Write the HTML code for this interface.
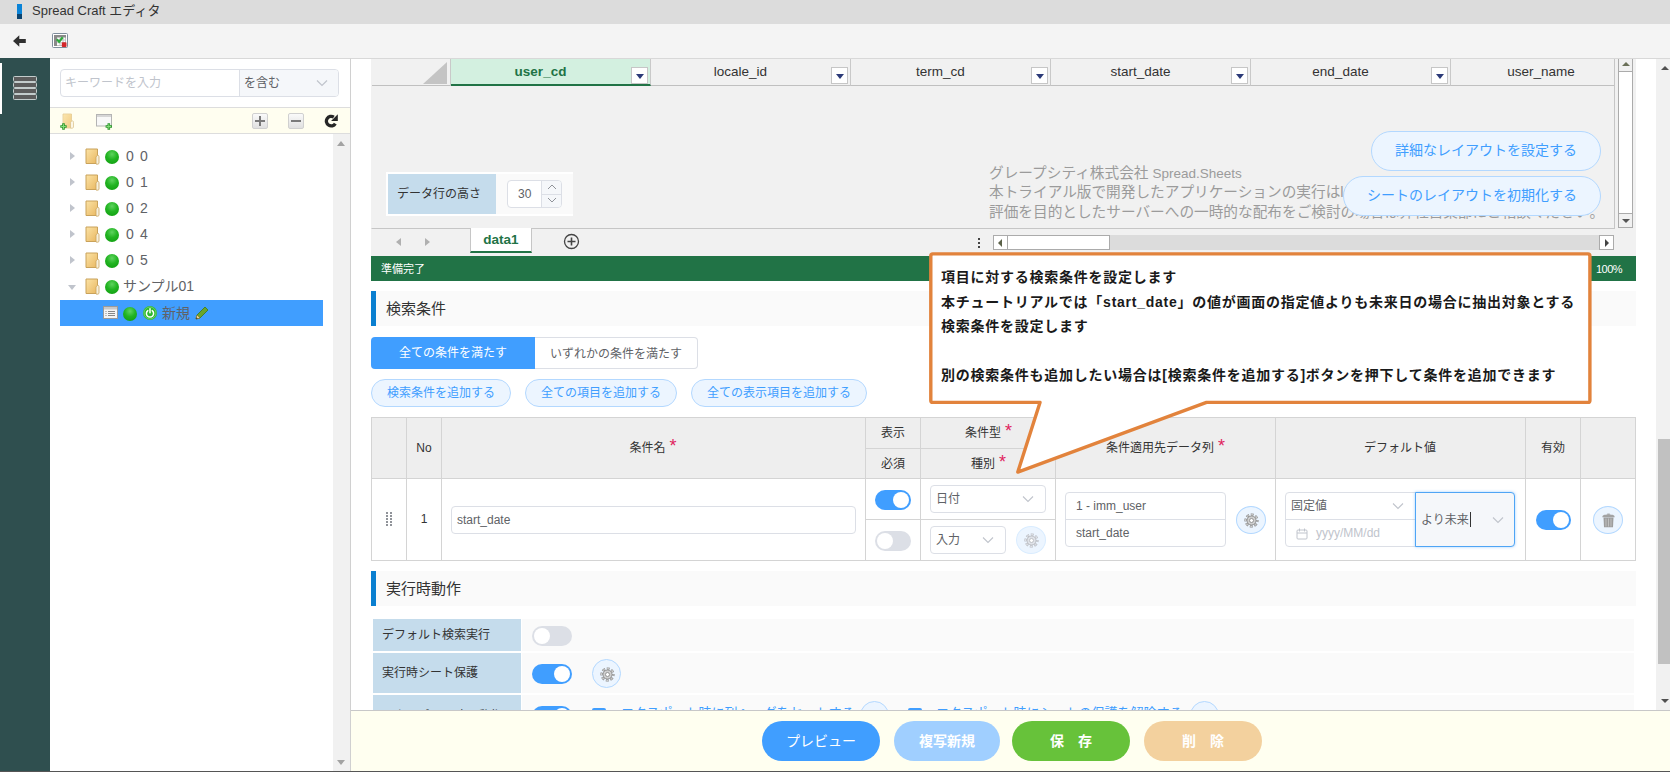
<!DOCTYPE html>
<html lang="ja">
<head>
<meta charset="utf-8">
<title>Spread Craft エディタ</title>
<style>
*{box-sizing:border-box;margin:0;padding:0}
html,body{width:1670px;height:772px;overflow:hidden;background:#fff}
body{font-family:"Liberation Sans","Noto Sans CJK JP",sans-serif;font-size:12px;color:#333;position:relative}
.abs{position:absolute}
#titlebar{left:0;top:0;width:1670px;height:24px;background:#dcdcdc}
#titlebar .mark{left:17px;top:4px;width:5px;height:15px;background:linear-gradient(#0a84d8 0,#0a84d8 66%,#0b4470 66%)}
#titlebar .ttl{left:32px;top:0;line-height:21px;font-size:13px;color:#333;white-space:nowrap}
#toolbar{left:0;top:24px;width:1670px;height:34px;background:#f4f4f4}
#side{left:0;top:58px;width:50px;height:714px;background:#2f4f4f}
#side .sel{left:0;top:5px;width:2px;height:51px;background:#fff}
#treepane{left:50px;top:58px;width:301px;height:714px;background:#fff;border-right:1px solid #d0d0d0;border-top:1px solid #d8d8d8}
#main{left:351px;top:58px;width:1319px;height:714px;background:#fff;overflow:hidden;border-top:1px solid #d8d8d8}

#toolbar .back{left:13px;top:11px}
#toolbar .ic2{left:52px;top:9px}
#side .hb{left:13px;width:24px;height:6px;background:#5c5c5c;border:1px solid #c3cccc;border-radius:1.5px}
#search{left:10px;top:10px;width:279px;height:28px;border:1px solid #dcdfe6;border-radius:4px;background:#fff}
#search .ph{left:4px;top:0;line-height:26px;font-size:12px;color:#c0c4cc;white-space:nowrap}
#search .sel{left:178px;top:0;width:99px;height:26px;background:#f5f7fa;border-left:1px solid #dcdfe6;border-radius:0 3px 3px 0}
#search .sel span{position:absolute;left:4px;top:0;line-height:26px;font-size:12px;color:#606266}
#ttool{left:0;top:48px;width:300px;height:27px;background:#fffef0;border-top:1px solid #ddd;border-bottom:1px solid #ddd}
.sqbtn{width:16px;height:16px;border:1px solid #d0d0d0;border-radius:2px;background:linear-gradient(#fafafa,#e0e0e0)}
.sqbtn i{position:absolute;background:#7a7a7a}
#tree{left:0;top:76px;width:283px;height:637px}
#tscroll{left:283px;top:75px;width:17px;height:637px;background:#f1f1f1}
.trow{left:10px;width:263px;height:26px;white-space:nowrap}
.trow .arr{position:absolute;top:9px;width:0;height:0;border:4px solid transparent}
.trow .arr.r{left:10px;border-left:5px solid #c0c4cc;border-right:0}
.trow .arr.d{left:8px;top:12px;border-top:5px solid #c0c4cc;border-bottom:0}
.trow .fold{position:absolute;left:25px;top:5px}
.trow .ball{position:absolute;left:45px;top:7px;width:14px;height:14px;border-radius:50%;background:radial-gradient(circle at 50% 30%,#5fd35f 0,#22b422 45%,#0c9a0c 100%)}
.trow .lbl{position:absolute;left:66px;top:1px;line-height:25px;font-size:14px;color:#606266;letter-spacing:1.2px}
.trow.sel{background:#409eff}

#mc{left:-351px;top:-59px;width:1670px;height:772px}
#sheet{left:371px;top:58px;width:1244px;height:171px;background:#f1f1f1;border:1px solid #c6c6c6;border-left-color:#f1f1f1;overflow:hidden}
.ch{top:0;height:27px;border-right:1px solid #c9c9c9;border-bottom:1px solid #c0c0c0;font-size:13.5px;line-height:25px;text-align:center;color:#333;font-family:"Liberation Sans",sans-serif}
.ch.on{background:#d3f0e0;color:#217346;font-weight:bold;border-bottom:2px solid #217346}
.fb{position:absolute;right:2px;bottom:1px;width:17px;height:17px;background:#fff;border:1px solid #c6c6c6}
.fb:after{content:"";position:absolute;left:4px;top:6px;border:4px solid transparent;border-top:5px solid #2b3a78;border-bottom:0}
.ch.on .fb{bottom:0}
.wm{left:617px;white-space:nowrap;font-size:14.67px;color:#9b9b9b;line-height:20px}
.pill{border:1px solid #b3d8ff;background:#ecf5ff;color:#409eff;border-radius:20px;text-align:center;white-space:nowrap}

.sech{left:371px;width:1265px;height:35px;background:#fafafa;border-left:5px solid #0a7fd0;font-size:15px;line-height:35px;padding-left:10px;color:#333}
.rb{top:337px;height:32px;font-size:12px;line-height:32px;text-align:center;white-space:nowrap}
.p28{top:379px;height:28px;line-height:26px;font-size:12px;border-radius:14px}
.hl{background:#d4d4d4}
.th{font-size:12px;color:#333;text-align:center;white-space:nowrap;line-height:16px}
.th b{font-weight:normal;color:#e0245e;position:relative;top:-.5px;margin-left:4px;font-size:18px;line-height:0}
.sw{width:36px;height:20px;border-radius:10px;background:#409eff}
.sw:after{content:"";position:absolute;top:2px;right:2px;width:16px;height:16px;border-radius:50%;background:#fff}
.sw.off{background:#dcdfe6}
.sw.off:after{right:auto;left:2px}
.inp{border:1px solid #dcdfe6;border-radius:4px;background:#fff;font-size:12px;color:#606266;white-space:nowrap}
.inp span{position:absolute;top:0}
.gear{border-radius:50%;background:#ecf5ff;border:1px solid #b3d8ff}
.lab{left:373px;width:148px;background:#c5dcec;font-size:12px;color:#333;padding-left:9px;white-space:nowrap}
.rowbg{left:522px;width:1112px;background:#fafafa}
.bb{top:721px;height:40px;border-radius:20px;color:#fff;text-align:center;font-size:14px;line-height:40px;white-space:nowrap}
</style>
</head>
<body>
<div id="titlebar" class="abs"><div class="abs mark"></div><div class="abs ttl">Spread Craft エディタ</div></div>
<div id="toolbar" class="abs"><svg class="abs back" width="14" height="12" viewBox="0 0 14 12"><path d="M0 6l6.300-5.800v3.700H12.800v4.200H6.300V11.800z" fill="#303030"/></svg>
<svg class="abs ic2" width="16" height="15" viewBox="0 0 16 15"><rect x=".5" y=".5" width="15" height="14" rx="1" fill="#fff" stroke="#7f8d9b"/><rect x="2" y="2" width="12" height="11" fill="#8a8a8a"/><path d="M5 4.500h8.500v8H5z" fill="#fff"/><path d="M5 7h8.500M5 9.700h8.500M8 4.500v8M11 4.500v8" stroke="#b5b5b5" stroke-width=".8"/><path d="M4.800 6.300l2.300 2.600 3.600-4.600" fill="none" stroke="#2eaa3c" stroke-width="2.200"/><rect x="9.800" y="9.300" width="4.700" height="4.700" rx=".8" fill="#d3262b"/></svg></div>
<div id="side" class="abs"><div class="abs sel"></div><div class="abs hb" style="top:18px"></div><div class="abs hb" style="top:24px"></div><div class="abs hb" style="top:30px"></div><div class="abs hb" style="top:36px"></div></div>
<div id="treepane" class="abs">
<div id="search" class="abs"><span class="abs ph">キーワードを入力</span><div class="abs sel"><span>を含む</span><svg class="abs" style="left:76px;top:9px" width="12" height="8" viewBox="0 0 12 8"><path d="M1 1.5l5 5 5-5" fill="none" stroke="#c0c4cc" stroke-width="1.2"/></svg></div></div>
<div id="ttool" class="abs">
<svg class="abs" style="left:10px;top:5px" width="16" height="18" viewBox="0 0 16 18"><path d="M3 1h8.500v14H3z" fill="#fbe7b4" stroke="#e3c98f" stroke-width=".8"/><path d="M3.400 1.400h7.700v13.200H3.400z" fill="url(#fg)" opacity=".55"/><path d="M10.500 9.500c1.300-2.500 3-2 3 0v4.500c0 1-1.200 1.500-3 1z" fill="#fbf6e6" stroke="#d8bd84" stroke-width=".7"/><path d="M3.500 10.300v6.400M.3 13.500h6.400" stroke="#2d962d" stroke-width="2.600"/><path d="M3.500 11.200v4.600M1.200 13.500h4.600" stroke="#86e07a" stroke-width="1"/></svg>
<svg class="abs" style="left:46px;top:6px" width="18" height="18" viewBox="0 0 18 18"><rect x=".5" y=".5" width="15" height="11.500" fill="#f8f8f8" stroke="#b4b4b4"/><rect x="1" y="1" width="14" height="2" fill="#d6d6d6"/><path d="M12.800 9.300v6.400M9.600 12.500h6.400" stroke="#2d962d" stroke-width="2.600"/><path d="M12.800 10.200v4.600M10.500 12.500h4.600" stroke="#86e07a" stroke-width="1"/></svg>
<div class="abs sqbtn" style="left:202px;top:5px"><i style="left:2px;top:6px;width:10px;height:2px"></i><i style="left:6px;top:2px;width:2px;height:10px"></i></div>
<div class="abs sqbtn" style="left:238px;top:5px"><i style="left:2px;top:6px;width:10px;height:2px"></i></div>
<svg class="abs" style="left:274px;top:6px" width="14" height="14" viewBox="0 0 14 14"><path d="M11.300 9.600A4.800 4.800 0 1 1 9.800 3.100" fill="none" stroke="#262626" stroke-width="3.300"/><path d="M13.800 .3v6.700H7.100z" fill="#262626"/></svg>
</div>
<div id="tree" class="abs"><div class="abs trow" style="top:8px"><span class="arr r"></span><svg class="fold" width="15" height="17" viewBox="0 0 15 17"><defs><linearGradient id="fg" x1="0" y1="0" x2="1" y2="1"><stop offset="0" stop-color="#fbe3a6"/><stop offset="1" stop-color="#e9b760"/></linearGradient></defs><path d="M1 1h11.5v14.5H1z" fill="url(#fg)" stroke="#c9a25a" stroke-width="1"/><path d="M11 9c1.5-2.5 3-2 3 0v6c0 1-1.2 1.5-3 1z" fill="#f7f0dc" stroke="#c9a25a" stroke-width=".8"/></svg><span class="ball"></span><span class="lbl">0 0</span></div><div class="abs trow" style="top:34px"><span class="arr r"></span><svg class="fold" width="15" height="17" viewBox="0 0 15 17"><defs><linearGradient id="fg" x1="0" y1="0" x2="1" y2="1"><stop offset="0" stop-color="#fbe3a6"/><stop offset="1" stop-color="#e9b760"/></linearGradient></defs><path d="M1 1h11.5v14.5H1z" fill="url(#fg)" stroke="#c9a25a" stroke-width="1"/><path d="M11 9c1.5-2.5 3-2 3 0v6c0 1-1.2 1.5-3 1z" fill="#f7f0dc" stroke="#c9a25a" stroke-width=".8"/></svg><span class="ball"></span><span class="lbl">0 1</span></div><div class="abs trow" style="top:60px"><span class="arr r"></span><svg class="fold" width="15" height="17" viewBox="0 0 15 17"><defs><linearGradient id="fg" x1="0" y1="0" x2="1" y2="1"><stop offset="0" stop-color="#fbe3a6"/><stop offset="1" stop-color="#e9b760"/></linearGradient></defs><path d="M1 1h11.5v14.5H1z" fill="url(#fg)" stroke="#c9a25a" stroke-width="1"/><path d="M11 9c1.5-2.5 3-2 3 0v6c0 1-1.2 1.5-3 1z" fill="#f7f0dc" stroke="#c9a25a" stroke-width=".8"/></svg><span class="ball"></span><span class="lbl">0 2</span></div><div class="abs trow" style="top:86px"><span class="arr r"></span><svg class="fold" width="15" height="17" viewBox="0 0 15 17"><defs><linearGradient id="fg" x1="0" y1="0" x2="1" y2="1"><stop offset="0" stop-color="#fbe3a6"/><stop offset="1" stop-color="#e9b760"/></linearGradient></defs><path d="M1 1h11.5v14.5H1z" fill="url(#fg)" stroke="#c9a25a" stroke-width="1"/><path d="M11 9c1.5-2.5 3-2 3 0v6c0 1-1.2 1.5-3 1z" fill="#f7f0dc" stroke="#c9a25a" stroke-width=".8"/></svg><span class="ball"></span><span class="lbl">0 4</span></div><div class="abs trow" style="top:112px"><span class="arr r"></span><svg class="fold" width="15" height="17" viewBox="0 0 15 17"><defs><linearGradient id="fg" x1="0" y1="0" x2="1" y2="1"><stop offset="0" stop-color="#fbe3a6"/><stop offset="1" stop-color="#e9b760"/></linearGradient></defs><path d="M1 1h11.5v14.5H1z" fill="url(#fg)" stroke="#c9a25a" stroke-width="1"/><path d="M11 9c1.5-2.5 3-2 3 0v6c0 1-1.2 1.5-3 1z" fill="#f7f0dc" stroke="#c9a25a" stroke-width=".8"/></svg><span class="ball"></span><span class="lbl">0 5</span></div><div class="abs trow" style="top:138px"><span class="arr d"></span><svg class="fold" width="15" height="17" viewBox="0 0 15 17"><defs><linearGradient id="fg" x1="0" y1="0" x2="1" y2="1"><stop offset="0" stop-color="#fbe3a6"/><stop offset="1" stop-color="#e9b760"/></linearGradient></defs><path d="M1 1h11.5v14.5H1z" fill="url(#fg)" stroke="#c9a25a" stroke-width="1"/><path d="M11 9c1.5-2.5 3-2 3 0v6c0 1-1.2 1.5-3 1z" fill="#f7f0dc" stroke="#c9a25a" stroke-width=".8"/></svg><span class="ball"></span><span class="lbl" style="left:63px;letter-spacing:0">サンプル01</span></div><div class="abs trow sel" style="top:165px">
<svg class="abs" style="left:43px;top:6px" width="15" height="13" viewBox="0 0 15 13"><rect x=".5" y=".5" width="14" height="12" fill="#f4f4f4" stroke="#9a9a9a"/><rect x="1" y="1" width="13" height="2.5" fill="#c8c8c8"/><path d="M2.5 5.5h1M2.5 7.5h1M2.5 9.5h1M5 5.5h7M5 7.5h7M5 9.5h7" stroke="#888" stroke-width="1"/></svg>
<span class="ball" style="left:63px"></span>
<svg class="abs" style="left:83px;top:6px" width="14" height="14" viewBox="0 0 14 14"><circle cx="7" cy="7" r="7" fill="#2eb82e"/><circle cx="7" cy="7" r="6" fill="none" stroke="#8fe08f" stroke-width=".6"/><path d="M4.8 4.6a3.6 3.6 0 1 0 4.4 0" fill="none" stroke="#fff" stroke-width="1.5" stroke-linecap="round"/><path d="M7 2.8v4" stroke="#fff" stroke-width="1.5" stroke-linecap="round"/></svg>
<span class="lbl" style="left:102px;letter-spacing:0">新規</span>
<svg class="abs" style="left:134px;top:5px" width="16" height="16" viewBox="0 0 16 16"><path d="M2 14l1-4 8-8 3 3-8 8z" fill="#6aa52a" stroke="#3f7a12" stroke-width=".8"/><path d="M2 14l1-4 3 3z" fill="#f1d9a0" stroke="#8a6a2a" stroke-width=".6"/><path d="M2 14l.5-1.8 1.3 1.3z" fill="#333"/></svg>
</div></div>
<div id="tscroll" class="abs">
<div class="abs" style="left:4px;top:7px;width:0;height:0;border:4px solid transparent;border-top:0;border-bottom:5px solid #a3a3a3"></div>
<div class="abs" style="left:4px;top:626px;width:0;height:0;border:4px solid transparent;border-bottom:0;border-top:5px solid #a3a3a3"></div>
</div>
</div>
<div id="main" class="abs"><div id="mc" class="abs"><div id="sheet" class="abs"><div class="abs ch" style="left:0;width:79px"><div class="abs" style="left:51px;top:3px;width:0;height:0;border-left:24px solid transparent;border-bottom:22px solid #c4c4c4"></div></div><div class="abs ch on" style="left:79px;width:200px;padding-right:20px;">user_cd<span class="fb"></span></div><div class="abs ch" style="left:279px;width:200px;padding-right:20px;">locale_id<span class="fb"></span></div><div class="abs ch" style="left:479px;width:200px;padding-right:20px;">term_cd<span class="fb"></span></div><div class="abs ch" style="left:679px;width:200px;padding-right:20px;">start_date<span class="fb"></span></div><div class="abs ch" style="left:879px;width:200px;padding-right:20px;">end_date<span class="fb"></span></div><div class="abs ch" style="left:1079px;width:166px;padding-left:14px;border-right:0;">user_name</div>
<div class="abs wm" style="top:104px">グレープシティ株式会社 <span style="font-size:13.5px">Spread.Sheets</span></div>
<div class="abs wm" style="top:123px">本トライアル版で開発したアプリケーションの実行はlocalhostでのみ可能です。</div>
<div class="abs wm" style="top:143px">評価を目的としたサーバーへの一時的な配布をご検討の場合は弊社営業部にご相談ください。</div>
</div>
<div class="abs" style="left:386px;top:172px;width:187px;height:44px;background:#fff"></div><div class="abs" style="left:496px;top:174px;width:77px;height:40px;background:#fafafa"></div>
<div class="abs" style="left:388px;top:174px;width:108px;height:40px;background:#c5dcec;line-height:40px;padding-left:9px;font-size:12px;color:#333;white-space:nowrap">データ行の高さ</div>
<div class="abs" style="left:507px;top:180px;width:55px;height:28px;border:1px solid #dcdfe6;border-radius:4px;background:#fff;font-size:12px;line-height:26px;color:#606266"><span class="abs" style="left:10px;top:0">30</span>
<div class="abs" style="left:33px;top:0;width:20px;height:26px;border-left:1px solid #dcdfe6;background:#f5f7fa;border-radius:0 3px 3px 0"><div class="abs" style="left:0;top:13px;width:20px;height:1px;background:#dcdfe6"></div>
<svg class="abs" style="left:5px;top:3px" width="10" height="6" viewBox="0 0 10 6"><path d="M1 5l4-4 4 4" fill="none" stroke="#909399" stroke-width="1"/></svg>
<svg class="abs" style="left:5px;top:16px" width="10" height="6" viewBox="0 0 10 6"><path d="M1 1l4 4 4-4" fill="none" stroke="#909399" stroke-width="1"/></svg></div></div>
<div class="abs pill" style="left:1371px;top:131px;width:230px;height:40px;line-height:37px;font-size:14px">詳細なレイアウトを設定する</div>
<div class="abs pill" style="left:1343px;top:176px;width:258px;height:40px;line-height:37px;font-size:14px">シートのレイアウトを初期化する</div>
<div class="abs" style="left:1615px;top:58px;width:21px;height:171px;background:#f1f1f1"></div>
<div class="abs" style="left:1618px;top:58px;width:15px;height:170px;background:#fff;border:1px solid #ababab">
<div class="abs" style="left:0;top:0;width:13px;height:13px;border-bottom:1px solid #ababab;background:#f1f1f1"><i class="abs" style="left:2.5px;top:3px;border:4px solid transparent;border-top:0;border-bottom:4.5px solid #6a7058"></i></div>
<div class="abs" style="left:0;bottom:0;width:13px;height:14px;border-top:1px solid #ababab;background:#f1f1f1"><i class="abs" style="left:2.5px;top:5px;border:4px solid transparent;border-bottom:0;border-top:4.500px solid #555"></i></div>
</div>
<div class="abs" id="tabstrip" style="left:371px;top:229px;width:1265px;height:27px;background:#f1f1f1">
<i class="abs" style="left:25px;top:9px;border:4px solid transparent;border-left:0;border-right:5px solid #b0b0b0"></i>
<i class="abs" style="left:54px;top:9px;border:4px solid transparent;border-right:0;border-left:5px solid #b0b0b0"></i>
<div class="abs" style="left:99px;top:-1px;width:62px;height:25px;background:#fff;border-left:1px solid #c6c6c6;border-right:1px solid #c6c6c6;border-bottom:2px solid #217346;text-align:center;font-weight:bold;color:#217346;font-size:13.5px;line-height:23px">data1</div>
<svg class="abs" style="left:192px;top:4px" width="17" height="17" viewBox="0 0 17 17"><circle cx="8.5" cy="8.5" r="7" fill="none" stroke="#444" stroke-width="1.3"/><path d="M8.5 4.5v8M4.5 8.5h8" stroke="#444" stroke-width="1.6"/></svg>
<div class="abs" style="left:607px;top:8px;width:3px;height:14px;font-size:0"><i class="abs" style="left:0;top:1px;width:2px;height:2px;background:#444"></i><i class="abs" style="left:0;top:5px;width:2px;height:2px;background:#444"></i><i class="abs" style="left:0;top:9px;width:2px;height:2px;background:#444"></i></div>
<div class="abs" style="left:622px;top:6px;width:621px;height:15px;background:#dcdcdc">
<div class="abs" style="left:0;top:0;width:15px;height:15px;background:#fff;border:1px solid #ababab"><i class="abs" style="left:4px;top:2.5px;border:4px solid transparent;border-left:0;border-right:4.5px solid #5b6148"></i></div>
<div class="abs" style="left:14px;top:0;width:103px;height:15px;background:#fff;border:1px solid #ababab"></div>
<div class="abs" style="right:0;top:0;width:15px;height:15px;background:#fff;border:1px solid #ababab"><i class="abs" style="left:5px;top:2.5px;border:4px solid transparent;border-right:0;border-left:4.5px solid #444"></i></div>
</div>
</div>
<div class="abs" style="left:371px;top:256px;width:1265px;height:25px;background:#217346;color:#fff;font-size:11px;line-height:24px"><span class="abs" style="left:10px;top:1px">準備完了</span><span class="abs" style="left:1225px;top:1px;font-size:11px;letter-spacing:-.5px">100%</span></div>

<div class="abs sech" style="top:291px">検索条件</div>
<div class="abs rb" style="left:371px;width:164px;background:#409eff;color:#fff;border-radius:4px 0 0 4px">全ての条件を満たす</div>
<div class="abs rb" style="left:535px;width:163px;background:#fff;color:#606266;border:1px solid #dcdfe6;border-left:0;border-radius:0 4px 4px 0">いずれかの条件を満たす</div>
<div class="abs pill p28" style="left:371px;width:140px">検索条件を追加する</div>
<div class="abs pill p28" style="left:525px;width:152px">全ての項目を追加する</div>
<div class="abs pill p28" style="left:691px;width:176px">全ての表示項目を追加する</div>
<div class="abs" style="left:371px;top:417px;width:1265px;height:62px;background:#eee"></div><i class="abs hl" style="left:371px;top:417px;width:1265px;height:1px"></i><i class="abs hl" style="left:371px;top:478px;width:1265px;height:1px"></i><i class="abs hl" style="left:371px;top:560px;width:1265px;height:1px"></i><i class="abs hl" style="left:371px;top:417px;width:1px;height:144px"></i><i class="abs hl" style="left:406px;top:417px;width:1px;height:144px"></i><i class="abs hl" style="left:441px;top:417px;width:1px;height:144px"></i><i class="abs hl" style="left:865px;top:417px;width:1px;height:144px"></i><i class="abs hl" style="left:920px;top:417px;width:1px;height:144px"></i><i class="abs hl" style="left:1055px;top:417px;width:1px;height:144px"></i><i class="abs hl" style="left:1275px;top:417px;width:1px;height:144px"></i><i class="abs hl" style="left:1525px;top:417px;width:1px;height:144px"></i><i class="abs hl" style="left:1580px;top:417px;width:1px;height:144px"></i><i class="abs hl" style="left:1635px;top:417px;width:1px;height:144px"></i><i class="abs hl" style="left:865px;top:448px;width:190px;height:1px"></i><i class="abs hl" style="left:865px;top:519px;width:190px;height:1px"></i><div class="abs th" style="left:324px;top:440px;width:200px">No</div><div class="abs th" style="left:553px;top:440px;width:200px">条件名<b>*</b></div><div class="abs th" style="left:793px;top:425px;width:200px">表示</div><div class="abs th" style="left:793px;top:456px;width:200px">必須</div><div class="abs th" style="left:888.5px;top:425px;width:200px">条件型<b>*</b></div><div class="abs th" style="left:888.5px;top:456px;width:200px">種別<b>*</b></div><div class="abs th" style="left:1065.5px;top:440px;width:200px">条件適用先データ列<b>*</b></div><div class="abs th" style="left:1300px;top:440px;width:200px">デフォルト値</div><div class="abs th" style="left:1453px;top:440px;width:200px">有効</div><div class="abs th" style="left:324px;top:511px;width:200px">1</div><div class="abs" style="left:386px;top:512px;width:6px;height:14px"><i class="abs" style="left:0px;top:0px;width:2px;height:2px;background:#909399"></i><i class="abs" style="left:0px;top:3px;width:2px;height:2px;background:#909399"></i><i class="abs" style="left:0px;top:6px;width:2px;height:2px;background:#909399"></i><i class="abs" style="left:0px;top:9px;width:2px;height:2px;background:#909399"></i><i class="abs" style="left:0px;top:12px;width:2px;height:2px;background:#909399"></i><i class="abs" style="left:4px;top:0px;width:2px;height:2px;background:#909399"></i><i class="abs" style="left:4px;top:3px;width:2px;height:2px;background:#909399"></i><i class="abs" style="left:4px;top:6px;width:2px;height:2px;background:#909399"></i><i class="abs" style="left:4px;top:9px;width:2px;height:2px;background:#909399"></i><i class="abs" style="left:4px;top:12px;width:2px;height:2px;background:#909399"></i></div><div class="abs inp" style="left:451px;top:506px;width:405px;height:28px;line-height:26px"><span style="left:5px">start_date</span></div><div class="abs sw" style="left:875px;top:490px"></div><div class="abs sw off" style="left:875px;top:531px"></div><div class="abs inp" style="left:930px;top:485px;width:116px;height:28px;line-height:26px"><span style="left:5px">日付</span><svg class="abs" style="left:91px;top:9px" width="12" height="8" viewBox="0 0 12 8"><path d="M1 1.5l5 5 5-5" fill="none" stroke="#c0c4cc" stroke-width="1.1"/></svg></div><div class="abs inp" style="left:930px;top:526px;width:76px;height:28px;line-height:26px"><span style="left:5px">入力</span><svg class="abs" style="left:51px;top:9px" width="12" height="8" viewBox="0 0 12 8"><path d="M1 1.5l5 5 5-5" fill="none" stroke="#c0c4cc" stroke-width="1.1"/></svg></div><div class="abs gear" style="left:1016px;top:526px;width:30px;height:28px;border-color:#d9ecff"><svg class="abs" style="left:6.5px;top:5.5px" width="15" height="15" viewBox="0 0 15 15"><circle cx="7.5" cy="7.5" r="5.900" fill="none" stroke="#b9bcc2" stroke-width="2.400" stroke-dasharray="2.900 1.734" stroke-dashoffset="1.450"/><circle cx="7.5" cy="7.5" r="5.900" fill="none" stroke="#dfe2e8" stroke-width="1.200" stroke-dasharray="1.900 2.734" stroke-dashoffset=".95"/><circle cx="7.5" cy="7.5" r="4.500" fill="#dfe2e8" stroke="#b9bcc2" stroke-width=".9"/><circle cx="7.5" cy="7.5" r="2" fill="#fff" stroke="#b9bcc2" stroke-width=".9"/></svg></div><div class="abs inp" style="left:1065px;top:492px;width:161px;height:55px;line-height:26px"><span style="left:10px;top:0">1 - imm_user</span><span style="left:10px;top:27px">start_date</span><i class="abs hl" style="left:0;top:26px;width:159px;height:1px;background:#dcdfe6"></i></div><div class="abs gear" style="left:1236px;top:506px;width:30px;height:28px"><svg class="abs" style="left:6.5px;top:5.5px" width="15" height="15" viewBox="0 0 15 15"><circle cx="7.5" cy="7.5" r="5.900" fill="none" stroke="#8e8e8e" stroke-width="2.400" stroke-dasharray="2.900 1.734" stroke-dashoffset="1.450"/><circle cx="7.5" cy="7.5" r="5.900" fill="none" stroke="#cfcfcf" stroke-width="1.200" stroke-dasharray="1.900 2.734" stroke-dashoffset=".95"/><circle cx="7.5" cy="7.5" r="4.500" fill="#cfcfcf" stroke="#8e8e8e" stroke-width=".9"/><circle cx="7.5" cy="7.5" r="2" fill="#fff" stroke="#8e8e8e" stroke-width=".9"/></svg></div><div class="abs inp" style="left:1285px;top:492px;width:131px;height:55px;line-height:26px;border-radius:4px 0 0 4px"><span style="left:5px;top:0">固定値</span><svg class="abs" style="left:106px;top:9px" width="12" height="8" viewBox="0 0 12 8"><path d="M1 1.5l5 5 5-5" fill="none" stroke="#c0c4cc" stroke-width="1.1"/></svg><i class="abs hl" style="left:0;top:26px;width:129px;height:1px;background:#dcdfe6"></i><svg class="abs" style="left:10px;top:35px" width="12" height="12" viewBox="0 0 12 12"><rect x="1" y="2" width="10" height="9" rx="1" fill="none" stroke="#c0c4cc"/><path d="M1 5h10M3.5 .5v3M8.500 .5v3" stroke="#c0c4cc"/></svg><span style="left:30px;top:27px;color:#c0c4cc">yyyy/MM/dd</span></div><div class="abs inp" style="left:1415px;top:492px;width:100px;height:55px;line-height:55px;border-color:#4fa5f5;background:#f5f7fa;border-radius:0 4px 4px 0;box-shadow:0 0 3px rgba(64,158,255,.5)"><span style="left:5px">より未来</span><i class="abs" style="left:54px;top:19px;width:1px;height:15px;background:#333"></i><svg class="abs" style="left:76px;top:23px" width="12" height="8" viewBox="0 0 12 8"><path d="M1 1.5l5 5 5-5" fill="none" stroke="#c0c4cc" stroke-width="1.1"/></svg></div><div class="abs sw" style="left:1536px;top:510px;width:35px"></div><div class="abs gear" style="left:1593px;top:506px;width:30px;height:28px"><svg class="abs" style="left:8px;top:6px" width="13" height="15" viewBox="0 0 13 15"><path d="M5.200 .6h2.600v1.200h-2.600z" fill="#a0a0a0"/><path d="M.3 4.200c.3-2 1.500-2.600 6.200-2.600s5.900.6 6.200 2.600z" fill="#a3a3a3"/><path d="M1.500 4.600h10l-.5 9.600h-9z" fill="#9d9d9d"/><path d="M4 5.500v8M6.500 5.500v8M9 5.500v8" stroke="#c4c4c4" stroke-width=".9"/></svg></div>
<div class="abs sech" style="top:571px">実行時動作</div>
<div class="abs lab" style="top:619px;height:32px;line-height:33px">デフォルト検索実行</div><div class="abs rowbg" style="top:619px;height:32px"></div>
<div class="abs sw off" style="left:532px;top:626px;width:40px"></div>
<div class="abs lab" style="top:653px;height:40px;line-height:40px">実行時シート保護</div><div class="abs rowbg" style="top:653px;height:40px"></div>
<div class="abs sw" style="left:532px;top:664px;width:40px"></div>
<div class="abs gear" style="left:592px;top:659px;width:29px;height:29px"><svg class="abs" style="left:6.5px;top:6.5px" width="15" height="15" viewBox="0 0 15 15"><circle cx="7.5" cy="7.5" r="5.900" fill="none" stroke="#8e8e8e" stroke-width="2.400" stroke-dasharray="2.900 1.734" stroke-dashoffset="1.450"/><circle cx="7.5" cy="7.5" r="5.900" fill="none" stroke="#cfcfcf" stroke-width="1.200" stroke-dasharray="1.900 2.734" stroke-dashoffset=".95"/><circle cx="7.5" cy="7.5" r="4.500" fill="#cfcfcf" stroke="#8e8e8e" stroke-width=".9"/><circle cx="7.5" cy="7.5" r="2" fill="#fff" stroke="#8e8e8e" stroke-width=".9"/></svg></div>
<div class="abs lab" style="top:695px;height:39px;line-height:42px">エクスポート時の動作</div><div class="abs rowbg" style="top:695px;height:39px"></div>
<div class="abs sw" style="left:532px;top:706px;width:40px"></div>
<div class="abs" style="left:592px;top:708px;width:14px;height:14px;border-radius:2px;background:#409eff"></div>
<div class="abs" style="left:621px;top:705px;font-size:13px;line-height:16px;color:#409eff;white-space:nowrap">エクスポート時に列ヘッダをセットする</div>
<div class="abs gear" style="left:860px;top:701px;width:29px;height:29px"></div>
<div class="abs" style="left:908px;top:708px;width:14px;height:14px;border-radius:2px;background:#409eff"></div>
<div class="abs" style="left:936px;top:705px;font-size:13px;line-height:16px;color:#409eff;white-space:nowrap">エクスポート時にシートの保護を解除する</div>
<div class="abs gear" style="left:1190px;top:701px;width:29px;height:29px"></div>
<svg class="abs" style="left:920px;top:245px" width="680" height="235" viewBox="920 245 680 235"><path d="M932.800 253.900H1587.900a2 2 0 0 1 2 2V400.400a2 2 0 0 1-2 2H1206.500L1017.800 472.100L1040 402.400H932.800a2 2 0 0 1-2-2V255.900a2 2 0 0 1 2-2Z" fill="#fff" stroke="#e2833c" stroke-width="3.400" stroke-linejoin="round"/></svg>
<div class="abs" id="cotext" style="left:941px;top:265px;width:645px;font-size:14px;font-weight:bold;line-height:24.5px;color:#1a1a1a;white-space:nowrap;letter-spacing:.75px">項目に対する検索条件を設定します<br>本チュートリアルでは「start_date」の値が画面の指定値よりも未来日の場合に抽出対象とする<br>検索条件を設定します<br><br>別の検索条件も追加したい場合は[検索条件を追加する]ボタンを押下して条件を追加できます</div>
<div class="abs" style="left:1656px;top:59px;width:14px;height:651px;background:#f1f1f1">
<i class="abs" style="left:4.500px;top:7px;border:4px solid transparent;border-top:0;border-bottom:4.500px solid #505050"></i>
<i class="abs" style="left:4.500px;top:640px;border:4px solid transparent;border-bottom:0;border-top:4.500px solid #505050"></i>
<div class="abs" style="left:2px;top:380px;width:12px;height:225px;background:#c1c1c1"></div>
</div>
<div class="abs" style="left:351px;top:710px;width:1319px;height:62px;background:#fffff0;border-top:1px solid #c8c8c8"></div>
<div class="abs bb" style="left:762px;width:118px;background:#409eff">プレビュー</div>
<div class="abs bb" style="left:894px;width:106px;background:#a0cfff;font-weight:bold">複写新規</div>
<div class="abs bb" style="left:1012px;width:118px;background:#67c23a;font-weight:bold">保　存</div>
<div class="abs bb" style="left:1144px;width:118px;background:#f3d19e;font-weight:bold">削　除</div>
</div></div>
<div class="abs" style="left:0;top:771px;width:1670px;height:1px;background:#555"></div>
</body>
</html>
